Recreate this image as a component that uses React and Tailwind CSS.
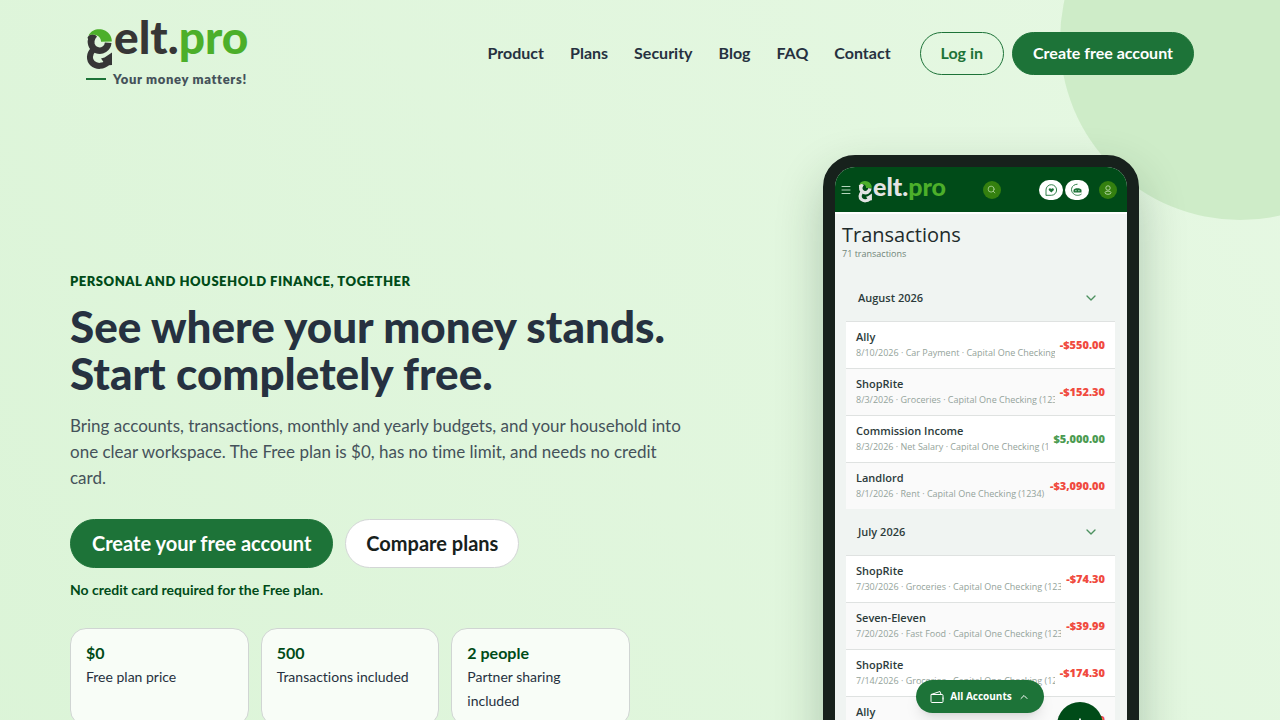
import { Search, Menu, ChevronDown, ChevronUp, Plus } from "lucide-react";
import React from "react";

const links = ["Product", "Plans", "Security", "Blog", "FAQ", "Contact"];

const stats = [
    { value: "$0", label: "Free plan price" },
    { value: "500", label: "Transactions included" },
    { value: "2 people", label: "Partner sharing included" },
];

const months = [
    {
        name: "August 2026",
        rows: [
            { name: "Ally", info: "8/10/2026 · Car Payment · Capital One Checking (1234)", amount: "-$550.00" },
            { name: "ShopRite", info: "8/3/2026 · Groceries · Capital One Checking (1234)", amount: "-$152.30" },
            { name: "Commission Income", info: "8/3/2026 · Net Salary · Capital One Checking (1234)", amount: "$5,000.00", income: true },
            { name: "Landlord", info: "8/1/2026 · Rent · Capital One Checking (1234)", amount: "-$3,090.00" },
        ],
    },
    {
        name: "July 2026",
        rows: [
            { name: "ShopRite", info: "7/30/2026 · Groceries · Capital One Checking (1234)", amount: "-$74.30" },
            { name: "Seven-Eleven", info: "7/20/2026 · Fast Food · Capital One Checking (1234)", amount: "-$39.99" },
            { name: "ShopRite", info: "7/14/2026 · Groceries · Capital One Checking (1234)", amount: "-$174.30" },
            { name: "Ally", info: "7/10/2026 · Car Payment · Capital One Checking (1234)", amount: "-$550.00" },
        ],
    },
];

function LogoMark({ className }) {
    return (
        <svg viewBox="0 0 28 41" className={className} fill="none" aria-hidden="true">
            <path d="M6.500 8.300A8.600 8.600 0 1 0 22.200 13.800" stroke="currentColor" strokeWidth="6.600" />
            <path d="M1.500 8.500C4 4.500 8 4.500 11 7.500L8.500 11L3 13Z" fill="currentColor" />
            <path d="M2.500 6.500C6 -0.500 14 -1 19 1.500C23.500 4 26 8 25.800 12.500L15 12.800C15.200 10 13.500 7.500 10.500 6.200C8 5 5 5.200 2.500 6.500Z" fill="#4caf2a" />
            <path d="M7 21C3 25 3 31 6.500 34.300C10.500 38 17.500 37.700 21.500 33.500" stroke="currentColor" strokeWidth="6" />
            <path d="M26 23.500V36L20 36.500L15 29.500L18.500 28.500Z" fill="currentColor" />
        </svg>
    );
}

function ChatHeart() {
    return (
        <svg viewBox="0 0 16 16" className="size-4" fill="none" aria-hidden="true">
            <path d="M3 13.500V8a5.300 5.300 0 1 1 5.300 5.300H3" stroke="#1d7338" strokeWidth="0.900" />
            <path d="M8.300 10.500L5.900 8.200C5 6.500 7.300 5.500 8.300 7C9.300 5.500 11.600 6.500 10.700 8.200Z" fill="#1d7338" />
        </svg>
    );
}

function Assistant() {
    return (
        <svg viewBox="0 0 16 16" className="size-4" fill="none" aria-hidden="true">
            <path d="M8.500 2.200C2 2.500 1 9 4.500 11.800C7 14 10.500 13.600 12.500 12" stroke="#1d7338" strokeWidth="0.900" />
            <path d="M4.500 8C5 5.500 12 5.500 12.500 8V10.500H4.500Z" fill="#1d7338" />
            <path d="M6.300 8.700H7.500M9.300 8.700H10.500" stroke="#d7efdc" strokeWidth="1" />
        </svg>
    );
}

function User() {
    return (
        <svg viewBox="0 0 10 10" className="size-[10px]" fill="none" stroke="#b9dba9" strokeWidth="0.900" aria-hidden="true">
            <circle cx="5" cy="3" r="2.200" />
            <ellipse cx="5" cy="7.700" rx="3" ry="1.600" />
        </svg>
    );
}

function Wallet() {
    return (
        <svg viewBox="0 0 14 14" className="size-[14px]" fill="none" stroke="currentColor" aria-hidden="true">
            <path d="M1 4.500H12a1 1 0 0 1 1 1V11.500a1 1 0 0 1-1 1H2a1 1 0 0 1-1-1ZM1 4.500L10 1.500L11 4.500M13 7.500V9.500" />
        </svg>
    );
}

function Header() {
    return (
        <header className="relative mx-auto flex w-full max-w-[1140px] items-center justify-between px-4 pt-[18px]">
            <a href="#" aria-label="gelt.pro" className="flex flex-col">
                <span className="flex items-start text-[#363636]">
                    <LogoMark className="mt-[11px] h-[41px] w-7" />
                    <span className="text-[46px] leading-[38px] font-black">
                        elt.<span className="text-[#4caf2a]">pro</span>
                    </span>
                </span>
                <span className="flex items-center gap-[7px] text-[13px] leading-[18px] font-extrabold tracking-[0.05em] text-[#45525a]">
                    <span className="h-[2px] w-5 bg-[#1d7338]"></span>
                    Your money matters!
                </span>
            </a>
            <nav className="flex items-center gap-[26px] text-base font-bold text-[#263140]">
                {links.map((link) => (
                    <a key={link} href="#">{link}</a>
                ))}
                <div className="ml-[3px] flex gap-2">
                    <button className="h-[43px] rounded-full border border-[#1d7338] px-5 text-[#1d7338]">Log in</button>
                    <button className="h-[43px] rounded-full border border-[#1d7338] bg-[#1d7338] px-5 text-white">Create free account</button>
                </div>
            </nav>
        </header>
    );
}

function Transaction({ row }) {
    return (
        <li className="flex h-[47px] items-center gap-[5px] border-t border-[#dfe2e1] bg-white px-[10px] even:bg-[#fafafa]">
            <div className="min-w-0 flex-1">
                <div className="text-[11px] leading-4 font-semibold text-[#2c3b3b]">{row.name}</div>
                <div className="overflow-hidden text-[9px] leading-4 whitespace-nowrap text-[#94a39a]">{row.info}</div>
            </div>
            <div className={row.income ? "text-[11px] font-extrabold text-[#4b9b51]" : "text-[11px] font-extrabold text-[#f04a3e]"}>
                {row.amount}
            </div>
        </li>
    );
}

function Phone() {
    return (
        <div className="w-[316px] rounded-[32px] border-12 border-[#17211c] bg-[#17211c] shadow-[0_20px_48px_rgba(0,50,20,0.24)]">
            <div className="relative h-[662px] overflow-hidden rounded-[20px] bg-[#f0f4f2] font-['Open_Sans',sans-serif]">
                <div className="flex h-[45px] items-center bg-[#004b18] px-[5px] text-white">
                    <Menu className="size-3 text-[#b5d6bd]" strokeWidth={2} />
                    <span className="ml-[6px] flex items-start font-['Lato',sans-serif] text-[#e4e4e4]">
                        <LogoMark className="mt-[5px] h-[22px] w-[15px]" />
                        <span className="text-[25px] leading-5 font-black">
                            elt.<span className="text-[#4caf2a]">pro</span>
                        </span>
                    </span>
                    <span className="ml-[37px] flex size-[18px] items-center justify-center rounded-full bg-[#34800f]">
                        <Search className="size-[9px] text-[#b9dba9]" />
                    </span>
                    <span className="ml-auto flex h-5 w-6 items-center justify-center rounded-full bg-white"><ChatHeart /></span>
                    <span className="ml-[2px] flex h-5 w-6 items-center justify-center rounded-full bg-white"><Assistant /></span>
                    <span className="mr-[5px] ml-[10px] flex size-[18px] items-center justify-center rounded-full bg-[#34800f]">
                        <User />
                    </span>
                </div>
                <div className="h-[63px] border-t-2 border-white px-[7px] pt-2">
                    <div className="text-xl leading-[26px] text-[#212b2b]">Transactions</div>
                    <div className="text-[9px] leading-3 text-[#718578]">71 transactions</div>
                </div>
                <div className="pr-3 pl-[11px]">
                    {months.map((month) => (
                        <section key={month.name}>
                            <div className="flex h-[46px] items-center justify-between pr-4 pl-3 text-[11px] font-semibold text-[#2c3b3b]">
                                {month.name}
                                <ChevronDown className="size-4 text-[#4d9160]" strokeWidth={2} />
                            </div>
                            <ul>
                                {month.rows.map((row, i) => (
                                    <Transaction key={i} row={row} />
                                ))}
                            </ul>
                        </section>
                    ))}
                </div>
                <button className="absolute top-[513px] left-[81px] flex h-[33px] w-32 items-center justify-center gap-[6px] rounded-full bg-[#1d7338] text-[10px] font-bold text-white shadow-lg">
                    <Wallet />
                    All Accounts
                    <ChevronUp className="size-3" />
                </button>
                <button aria-label="Add transaction" className="absolute top-[535px] right-6 flex size-[46px] items-center justify-center rounded-full bg-[#004b18] text-white shadow-lg">
                    <Plus className="size-5" />
                </button>
            </div>
        </div>
    );
}

export default function App() {
    return (
        <div className="relative min-h-screen overflow-hidden bg-[linear-gradient(60deg,#dbf4d7,#e6f8e3)] font-['Lato',sans-serif] [font-variant-ligatures:none]">
            <div className="absolute -top-[140px] -right-[140px] size-[360px] rounded-full bg-[#ceecc8]"></div>
            <Header />

            {/* Hero */}
            <main className="relative mx-auto flex w-full max-w-[1140px] items-center pt-[67px] pb-16">
                <div className="flex-1">
                    <p className="text-[13px] leading-5 font-extrabold tracking-[0.04em] text-[#004b18] uppercase">
                        Personal and household finance, together
                    </p>
                    <h1 className="mt-3 text-[44px] leading-[47px] font-black text-[#263140]">
                        See where your money stands.<br />Start completely free.
                    </h1>
                    <p className="mt-4 max-w-[620px] text-[17px] leading-[26px] text-[#45525a]">
                        Bring accounts, transactions, monthly and yearly budgets, and your household into one clear
                        workspace. The Free plan is $0, has no time limit, and needs no credit card.
                    </p>
                    <div className="mt-7 flex gap-3 text-xl font-bold">
                        <button className="h-[49px] rounded-full border border-[#1d7338] bg-[#1d7338] px-[21px] text-white">Create your free account</button>
                        <button className="h-[49px] rounded-full border border-[#d3d6d6] bg-white px-5 text-[#17211c]">Compare plans</button>
                    </div>
                    <p className="mt-3 text-sm leading-5 font-bold text-[#004b18]">No credit card required for the Free plan.</p>
                    <div className="mt-7 grid max-w-[560px] grid-cols-3 gap-3">
                        {stats.map((stat) => (
                            <div key={stat.value} className="rounded-2xl border border-[#d0d5d3] bg-[#f8fdf7] px-[15px] py-3">
                                <div className="text-base leading-6 font-bold text-[#004b18]">{stat.value}</div>
                                <div className="text-sm leading-6 text-[#263140]">{stat.label}</div>
                            </div>
                        ))}
                    </div>
                </div>
                <div className="flex w-[458px] justify-center">
                    <Phone />
                </div>
            </main>
        </div>
    );
}
